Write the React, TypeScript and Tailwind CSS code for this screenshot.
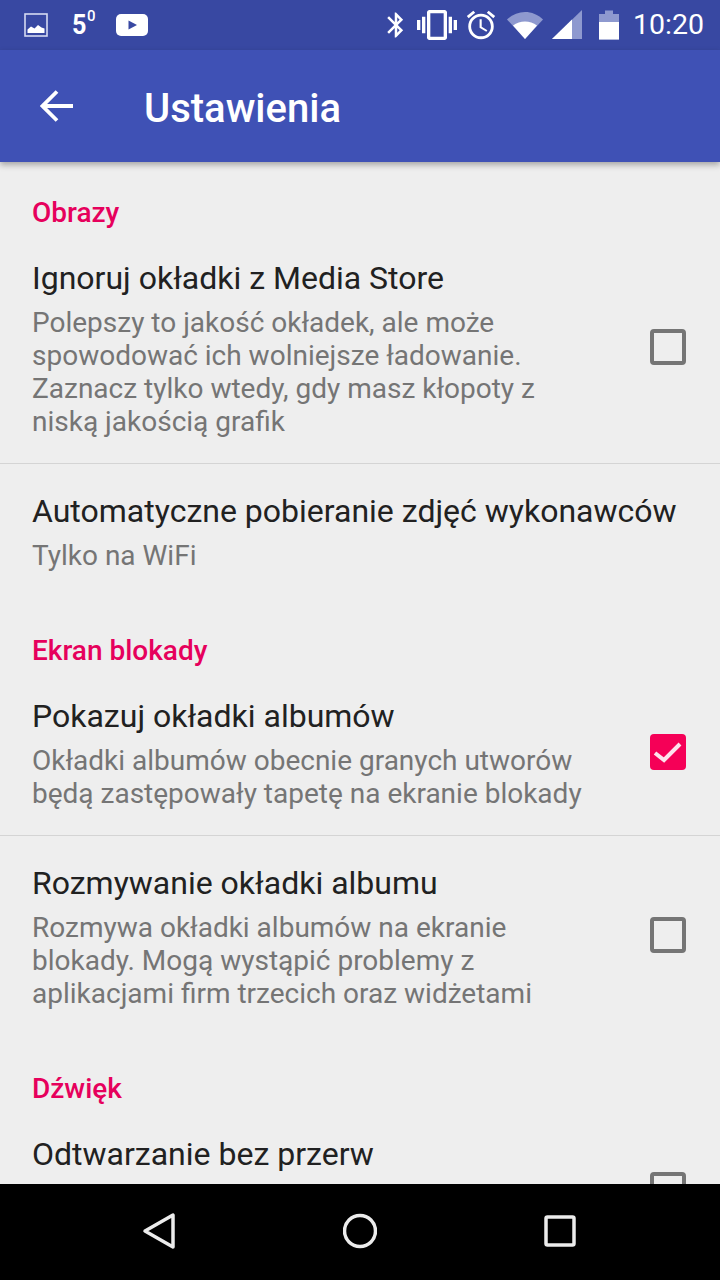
import { MdBluetooth, MdVibration, MdAccessAlarm } from 'react-icons/md';

type Pref = {
  title: string;
  lines?: string[];
  checked?: boolean;
  hasBox?: boolean;
  divider?: boolean;
};

function CheckBox({ checked }: { checked?: boolean }) {
  if (checked) {
    return (
      <div className="w-9 h-9 shrink-0 rounded-[4px] bg-[#f50057] flex items-center justify-center">
        <svg width="36" height="36" viewBox="0 0 36 36" fill="none">
          <path d="M5 19 L14 26 L30 10" stroke="#fde3ec" strokeWidth="4" />
        </svg>
      </div>
    );
  }
  return <div className="w-9 h-9 shrink-0 rounded-[4px] border-[4px] border-[#757575]" />;
}

function PrefRow({ title, lines, checked, hasBox, divider }: Pref) {
  return (
    <div className={divider ? 'border-b border-[#d4d4d4]' : ''}>
      <div className="flex items-center justify-between pl-8 pr-[34px] pt-[27px] pb-[25px]">
        <div className="min-w-0">
          <div className="text-[32px] leading-[40px] text-[#212121] whitespace-nowrap">{title}</div>
          {lines && (
            <div className="mt-2 text-[28px] leading-[33px] text-[#757575] whitespace-nowrap">
              {lines.map((l) => (
                <div key={l}>{l}</div>
              ))}
            </div>
          )}
        </div>
        {hasBox && (
          <div className="-mt-[3px]">
            <CheckBox checked={checked} />
          </div>
        )}
      </div>
    </div>
  );
}

function Category({ label, first }: { label: string; first?: boolean }) {
  return (
    <div className={`${first ? 'pt-[33px]' : 'pt-[36px]'} pl-8 text-[28px] leading-[36px] font-medium text-[#e6005c]`}>
      {label}
    </div>
  );
}

function StatusBar() {
  return (
    <div className="h-[50px] shrink-0 bg-[#3848a2] flex items-center justify-between text-white">
      <div className="flex items-center pl-6">
        {/* picture notification */}
        <svg width="24" height="24" viewBox="0 0 24 24" fill="none">
          <rect x="1" y="1" width="22" height="22" stroke="#d5daf2" strokeWidth="1.6" />
          <path d="M3.5 20 V16.5 L7 13.5 L10.5 15.5 L14 12 L17.5 14.5 L20.5 15.5 V20 Z" fill="#fff" />
        </svg>
        <span className="ml-6 text-[28px] leading-none font-bold flex items-start w-[26px]">
          <span className="inline-block origin-left scale-x-[0.9]">5</span>
          <span className="text-[15px] font-medium -ml-[1px] mt-[-2px]">0</span>
        </span>
        {/* youtube */}
        <svg className="ml-[18px]" width="32" height="22" viewBox="0 0 32 22">
          <rect width="32" height="22" rx="5" fill="#fff" />
          <path d="M12.5 6.5 L21 11 L12.5 15.5 Z" fill="#3848a2" />
        </svg>
      </div>
      <div className="flex items-center pr-4">
        <MdBluetooth size={30} className="-mr-[2px]" />
        <MdVibration size={40} className="ml-[8px]" />
        <MdAccessAlarm size={34} className="ml-[7px]" />
        {/* wifi */}
        <svg className="ml-[9px]" width="36" height="28" viewBox="0 0 36 28">
          <path d="M0 8.5 C10 -1.5 26 -1.5 36 8.5 L18 28 Z" fill="#8e99cf" />
          <path d="M6 14.5 C13 9 23 9 30 14.5 L18 28 Z" fill="#fff" />
        </svg>
        {/* signal */}
        <svg className="ml-[9px]" width="30" height="30" viewBox="0 0 30 30">
          <path d="M0 29 L30 0 V29 Z" fill="#8e99cf" />
          <path d="M0 29 L20 9.5 V29 Z" fill="#fff" />
        </svg>
        {/* battery */}
        <svg className="ml-[17px]" width="20" height="30" viewBox="0 0 20 30">
          <path d="M0 4 H6 V0.5 H14 V4 H20 V29.5 H0 Z" fill="#8e99cf" />
          <rect y="12" width="20" height="17.5" fill="#fff" />
        </svg>
        <span className="ml-[14px] text-[28.5px] leading-none font-normal">10:20</span>
      </div>
    </div>
  );
}

function NavBar() {
  return (
    <div className="h-24 shrink-0 bg-black flex items-center justify-center gap-[167px] pb-[2px] pr-[2px]">
      <svg width="34" height="38" viewBox="0 0 34 38" fill="none">
        <path d="M31 3 V35 L3 19 Z" stroke="#ececec" strokeWidth="3.5" strokeLinejoin="round" />
      </svg>
      <svg width="34" height="36" viewBox="0 0 34 36" fill="none">
        <circle cx="17" cy="18" r="15.5" stroke="#ececec" strokeWidth="3.5" />
      </svg>
      <svg width="32" height="32" viewBox="0 0 32 32" fill="none">
        <rect x="2" y="2" width="28" height="28" rx="1.5" stroke="#ececec" strokeWidth="3.5" />
      </svg>
    </div>
  );
}

export default function App() {
  return (
    <div className="w-[720px] h-[1280px] flex flex-col overflow-hidden bg-[#eeeeee] font-['Roboto',sans-serif]">
      <StatusBar />

      {/* Toolbar */}
      <header className="relative z-10 h-[112px] shrink-0 bg-[#3f51b5] shadow-[0_3px_6px_rgba(0,0,0,0.3)] flex items-center pl-10">
        <svg width="34" height="34" viewBox="0 0 34 34" fill="none">
          <path d="M33 17 H3 M17 2.5 L2.5 17 L17 31.5" stroke="#fff" strokeWidth="3.8" />
        </svg>
        <h1 className="ml-[70px] mt-[5px] text-[40px] leading-none font-medium text-white">Ustawienia</h1>
      </header>

      {/* Preference list */}
      <main className="flex-1 overflow-hidden">
        <Category label="Obrazy" first />
        <PrefRow
          title="Ignoruj okładki z Media Store"
          lines={[
            'Polepszy to jakość okładek, ale może',
            'spowodować ich wolniejsze ładowanie.',
            'Zaznacz tylko wtedy, gdy masz kłopoty z',
            'niską jakością grafik',
          ]}
          hasBox
          divider
        />
        <PrefRow title="Automatyczne pobieranie zdjęć wykonawców" lines={['Tylko na WiFi']} />

        <Category label="Ekran blokady" />
        <PrefRow
          title="Pokazuj okładki albumów"
          lines={['Okładki albumów obecnie granych utworów', 'będą zastępowały tapetę na ekranie blokady']}
          hasBox
          checked
          divider
        />
        <PrefRow
          title="Rozmywanie okładki albumu"
          lines={[
            'Rozmywa okładki albumów na ekranie',
            'blokady. Mogą wystąpić problemy z',
            'aplikacjami firm trzecich oraz widżetami',
          ]}
          hasBox
        />

        <Category label="Dźwięk" />
        <div className="flex justify-between pl-8 pr-[34px] pt-[27px]">
          <div className="text-[32px] leading-[40px] text-[#212121]">Odtwarzanie bez przerw</div>
          <div className="mt-[38px]">
            <CheckBox />
          </div>
        </div>
      </main>

      <NavBar />
    </div>
  );
}
